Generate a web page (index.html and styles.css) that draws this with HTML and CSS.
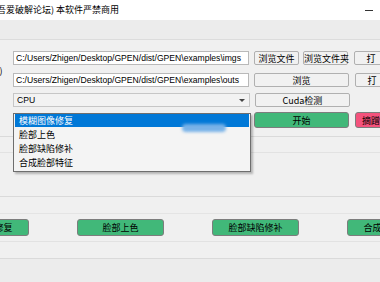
FILE: index.html
```html
<!DOCTYPE html>
<html lang="zh-CN">
  <head>
    <meta charset="UTF-8" />
    <title>GPEN</title>
    <link rel="stylesheet" href="styles.css">
  </head>
  <body>
    <div class="window">
      <div class="titlebar">
        <span class="title">吾爱破解论坛) 本软件严禁商用</span>
        <span class="minimize"></span>
      </div>
      <div class="toolbar"></div>

      <div class="form">
        <div class="label">：)</div>
        <div class="rows">
          <div class="row row-first">
            <input class="path" type="text" value="C:/Users/Zhigen/Desktop/GPEN/dist/GPEN\examples\imgs" />
            <button class="btn btn-small">浏览文件</button>
            <button class="btn btn-small">浏览文件夹</button>
            <button class="btn btn-edge">打</button>
          </div>
          <div class="row">
            <input class="path" type="text" value="C:/Users/Zhigen/Desktop/GPEN/dist/GPEN\examples\outs" />
            <button class="btn btn-wide">浏览</button>
            <button class="btn btn-edge">打</button>
          </div>
          <div class="row row-select">
            <div class="select">
              <span>CPU</span>
              <span class="arrow"></span>
              <ul class="menu">
                <li class="active">模糊图像修复</li>
                <li>脸部上色</li>
                <li>脸部缺陷修补</li>
                <li>合成脸部特征</li>
              </ul>
              <div class="blob"></div>
            </div>
            <button class="btn btn-wide">Cuda检测</button>
          </div>
          <div class="row row-start">
            <div class="spacer"></div>
            <button class="btn btn-go">开始</button>
            <button class="btn btn-pink">摘蹭</button>
          </div>
        </div>
      </div>

      <div class="line line-a"></div>
      <div class="line line-b"></div>
      <div class="line line-c"></div>
      <div class="line line-d"></div>

      <div class="modes">
        <button class="btn btn-mode">模糊图像修复</button>
        <button class="btn btn-mode">脸部上色</button>
        <button class="btn btn-mode">脸部缺陷修补</button>
        <button class="btn btn-mode">合成脸部特征</button>
      </div>

      <div class="line line-e"></div>
      <div class="footer"></div>
    </div>
  </body>
</html>
```

FILE: styles.css
```css
* {
  margin: 0;
  padding: 0;
  box-sizing: border-box;
}

body {
  background: #f0f0f0;
  font-family: "Noto Sans CJK SC", "Liberation Sans", sans-serif;
  font-size: 9px;
  color: #000;
}

.window {
  width: 380px;
  height: 282px;
  overflow: hidden;
}

.titlebar {
  display: flex;
  justify-content: space-between;
  align-items: center;
  height: 20px;
  background: #fff;
}

.title {
  margin-left: -3px;
  font-size: 9px;
  line-height: 20px;
}

.minimize {
  width: 8px;
  height: 1px;
  margin-right: 7px;
  background: #333;
}

.toolbar {
  height: 20px;
  background: #ececec;
  border-bottom: 1px solid #dcdcdc;
}

.form {
  display: flex;
  padding-top: 11px;
}

.label {
  flex: none;
  width: 13px;
  padding-top: 13px;
  margin-left: -5px;
  margin-right: 5px;
  white-space: nowrap;
  font-size: 9px;
}

.rows {
  flex: none;
  display: flex;
  flex-direction: column;
  gap: 8px;
}

.row {
  display: flex;
  align-items: stretch;
  height: 14px;
  white-space: nowrap;
}

.row-select {
  margin-top: -2px;
}

.row-start {
  height: 16px;
  margin-top: -3px;
}

.path {
  flex: none;
  width: 236px;
  height: 14px;
  padding: 0 2px;
  border: 1px solid #b9b9b9;
  background: #fff;
  font-family: "Liberation Sans", sans-serif;
  font-size: 8.6px;
  color: #000;
  outline: none;
}

.btn {
  flex: none;
  height: 100%;
  margin-left: 5px;
  border: 1px solid #b0b0b0;
  border-radius: 2px;
  background: #f1f1f1;
  font-family: "Noto Sans CJK SC", "Liberation Sans", sans-serif;
  font-size: 9px;
  color: #000;
  line-height: 1;
}

.btn-small {
  width: 45px;
}

.btn-small + .btn-small {
  margin-left: 4px;
}

.btn-wide {
  width: 95px;
}

.btn-edge {
  width: 40px;
  margin-left: 6px;
  padding-right: 6px;
}

.select {
  flex: none;
  position: relative;
  display: flex;
  justify-content: space-between;
  align-items: center;
  width: 237px;
  padding: 0 3px;
  border: 1px solid #c6c6c6;
  background: #f2f2f2;
  font-family: "Liberation Sans", sans-serif;
  font-size: 8.6px;
}

.arrow {
  width: 0;
  height: 0;
  margin-right: 1px;
  border-left: 3px solid transparent;
  border-right: 3px solid transparent;
  border-top: 3px solid #444;
}

.menu {
  position: absolute;
  top: 19px;
  left: -1px;
  z-index: 2;
  width: 238px;
  padding: 0 1px 1px;
  list-style: none;
  border: 1px solid #6e6e6e;
  background: #f4f4f4;
  box-shadow: 2px 2px 2px rgba(0, 0, 0, 0.25);
  font-family: "Noto Sans CJK SC", sans-serif;
  font-size: 9px;
}

.menu li {
  height: 14px;
  padding-left: 4px;
  line-height: 14px;
}

.menu li.active {
  height: 13px;
  line-height: 13px;
  margin-bottom: 1px;
  background: #0078d7;
  color: #fff;
}

.blob {
  position: absolute;
  top: 30px;
  left: 168px;
  z-index: 3;
  width: 44px;
  height: 8px;
  border-radius: 4px;
  background: #78b2e8;
  filter: blur(1.5px);
}

.spacer {
  flex: none;
  width: 236px;
}

.btn-go {
  width: 95px;
  border: 1px solid #7d7d7d;
  border-radius: 3px;
  background: #41b879;
}

.btn-pink {
  width: 40px;
  margin-left: 6px;
  border: 1px solid #7d7d7d;
  border-radius: 3px;
  background: #f4527c;
  text-align: left;
  padding-left: 6px;
}

.line {
  border-top: 1px solid #dadada;
}

.line-a {
  margin-top: 8px;
}

.line-b {
  margin-top: 15px;
  border-color: #e2e2e2;
}

.line-c {
  margin-top: 43px;
}

.line-d {
  margin-top: 16px;
  border-color: #e4e4e4;
}

.modes {
  display: flex;
  gap: 48px;
  margin-top: 5px;
  margin-left: -58px;
  height: 17px;
}

.btn-mode {
  width: 87px;
  margin-left: 0;
  border: 1px solid #7d7d7d;
  border-radius: 3px;
  background: #41b879;
}

.line-e {
  margin-top: 5px;
  border-color: #e2e2e2;
}

.footer {
  height: 100px;
  margin-top: 16px;
  border-top: 1px solid #dadada;
  background: #ececec;
}
```
